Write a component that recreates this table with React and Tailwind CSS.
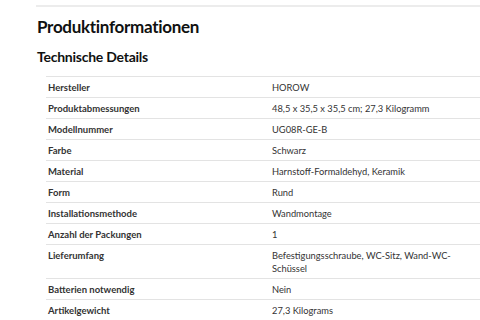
const rows = [
  ["Hersteller", "HOROW"],
  ["Produktabmessungen", "48,5 x 35,5 x 35,5 cm; 27,3 Kilogramm"],
  ["Modellnummer", "UG08R-GE-B"],
  ["Farbe", "Schwarz"],
  ["Material", "Harnstoff-Formaldehyd, Keramik"],
  ["Form", "Rund"],
  ["Installationsmethode", "Wandmontage"],
  ["Anzahl der Packungen", "1"],
  ["Lieferumfang", "Befestigungsschraube, WC-Sitz, Wand-WC-Schüssel"],
  ["Batterien notwendig", "Nein"],
  ["Artikelgewicht", "27,3 Kilograms"],
];

export default function App() {
  return (
    <div
      className="w-[480px] h-[320px] overflow-hidden bg-white pl-[36px] pt-[5px]"
      style={{ fontFamily: "Lato, Roboto, 'Liberation Sans', sans-serif" }}
    >
      <div className="h-[2px] bg-[#ececec]" />
      <h1 className="mt-[9px] pl-[1px] text-[17px] leading-[22px] font-bold tracking-[-0.3px] text-[#0f1111]">
        Produktinformationen
      </h1>
      <h2 className="mt-[10px] pl-[1px] text-[14px] leading-[18px] font-bold tracking-[-0.25px] text-[#0f1111]">
        Technische Details
      </h2>
      <div className="mt-[10px] ml-[10px] border-t border-[#e3e3e3]">
        {rows.map(([label, value]) => (
          <div
            key={label}
            className="grid grid-cols-[224px_196px] border-b border-[#e3e3e3] py-[3.5px] leading-[13px]"
          >
            <div className="pl-[2px] text-[9.5px] font-bold text-[#333333]">{label}</div>
            <div className="pl-[2px] text-[9.3px] text-[#333333]">{value}</div>
          </div>
        ))}
      </div>
    </div>
  );
}
